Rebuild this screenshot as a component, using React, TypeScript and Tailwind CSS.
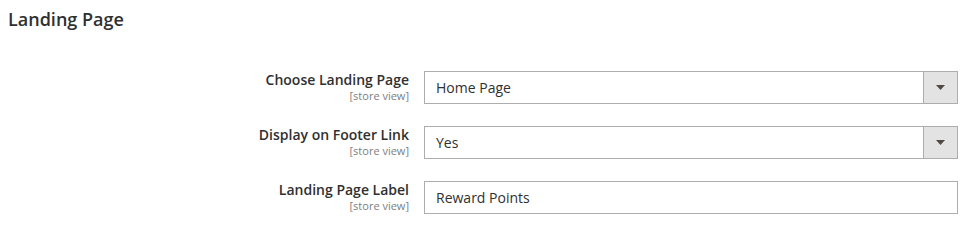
const rows = [
  { label: 'Choose Landing Page', value: 'Home Page', select: true },
  { label: 'Display on Footer Link', value: 'Yes', select: true },
  { label: 'Landing Page Label', value: 'Reward Points', select: false },
]

export default function App() {
  return (
    <div className="w-[979px] h-[225px] bg-white text-[#303030] font-['Open_Sans',sans-serif]">
      <h2 className="pl-[8px] pt-[7px] text-[18px] leading-[24px] font-semibold text-[#303030]">
        Landing Page
      </h2>
      <div className="mt-[40px] flex flex-col gap-[22px]">
        {rows.map((row) => (
          <div key={row.label} className="flex items-start">
            <div className="w-[409px] text-right">
              <div className="text-[14px] leading-[18px] font-semibold text-[#303030]">{row.label}</div>
              <div className="text-[11px] leading-[13px] text-[#808080]">[store view]</div>
            </div>
            <div className="ml-[15px] w-[534px] h-[33px] border border-[#adadad] bg-white flex items-stretch">
              <div className="flex-1 pl-[11px] flex items-center text-[14px] text-[#303030]">{row.value}</div>
              {row.select && (
                <div className="w-[34px] bg-[#e3e3e3] border-l border-[#adadad] flex items-center justify-center">
                  <svg width="9" height="5" viewBox="0 0 9 5">
                    <path d="M0 0 H9 L4.5 5 Z" fill="#514943" />
                  </svg>
                </div>
              )}
            </div>
          </div>
        ))}
      </div>
    </div>
  )
}
